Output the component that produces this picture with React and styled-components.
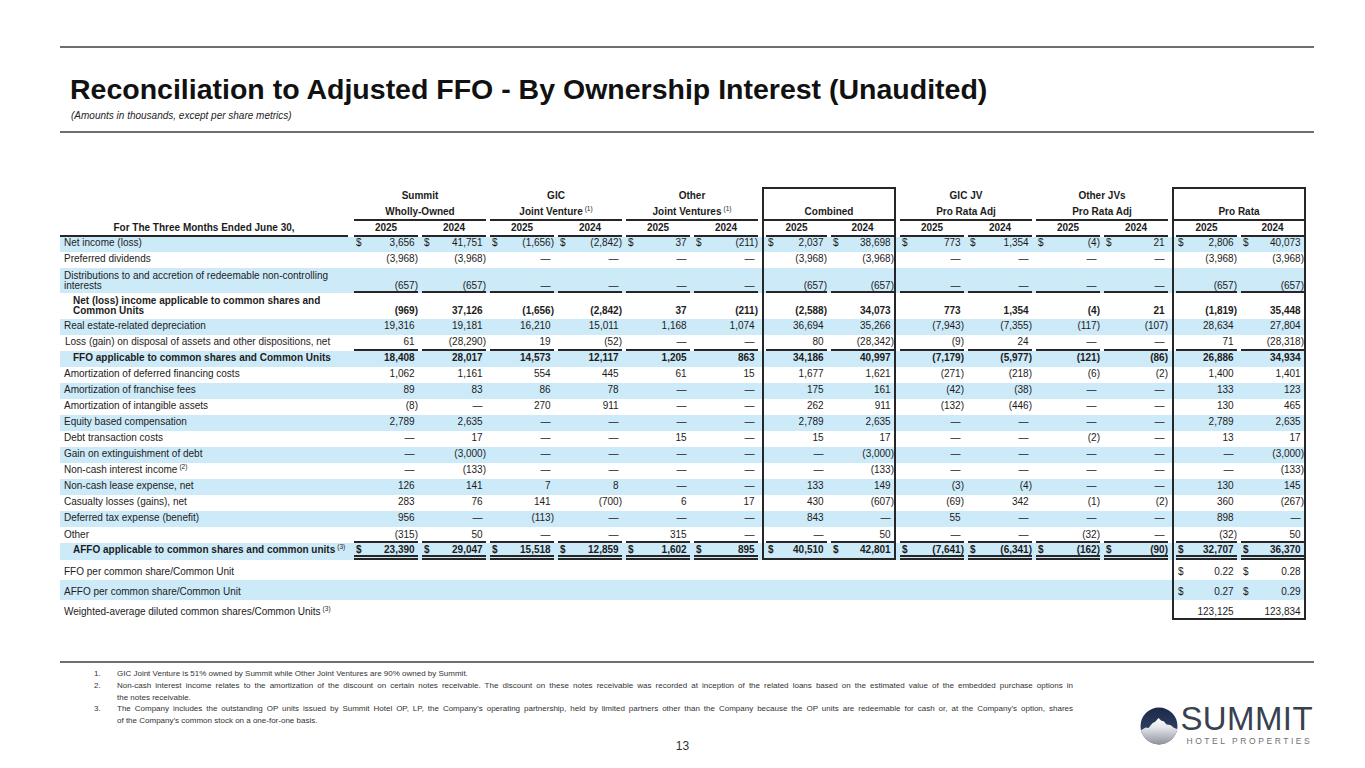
import React from 'react';
import styled, { createGlobalStyle } from 'styled-components';

const INK = '#1c1c1c';
const LINE = '#262626';
const SHADE = '#cdeaf9';
const COLS = '290px repeat(6, 68px) 4px 67px 67px repeat(4, 68px) 4px 67px 67px';

const GlobalStyle = createGlobalStyle`
  html, body { margin: 0; padding: 0; background: #ffffff; }
  body { font-family: "Liberation Sans", Arial, Helvetica, sans-serif; color: ${INK}; }
`;

const Slide = styled.main`
  box-sizing: border-box;
  width: 1365px;
  height: 768px;
  overflow: hidden;
  padding-top: 46px;
  display: flex;
  flex-direction: column;
  background: #fff;
`;

const Rule = styled.div`
  flex: none;
  height: 2px;
  margin: ${p => p.$top || 0}px 51px 0 60px;
  background: #6f6f6f;
`;

const Title = styled.h1`
  margin: 25px 0 0 70px;
  font-size: 28.5px;
  line-height: 32px;
  font-weight: 700;
  color: #111;
`;

const Subtitle = styled.p`
  margin: 5px 0 9px 71px;
  font-size: 10px;
  line-height: 12px;
  font-style: italic;
  color: #222;
`;

const Table = styled.section`
  margin: 54px 0 0 60px;
  width: 1246px;
  font-size: 10px;
  line-height: 10px;
  color: ${INK};
`;

const Row = styled.div`
  display: grid;
  grid-template-columns: ${COLS};
  height: ${p => p.$h}px;
  background: ${p => (p.$shade ? SHADE : '#fff')};
`;

const Cell = styled.div`
  box-sizing: border-box;
  min-width: 0;
  display: flex;
  grid-column: span ${p => p.$span || 1};
  padding: 0 ${p => p.$pr || 0}px 0 ${p => (p.$pl === undefined ? 4 : p.$pl)}px;
  border-left: ${p => (p.$bl ? `2px solid ${LINE}` : '0')};
  border-right: ${p => (p.$br ? `2px solid ${LINE}` : '0')};
  border-top: ${p => (p.$bt ? `2px solid ${LINE}` : '0')};
  border-bottom: ${p => (p.$bb ? `2px solid ${LINE}` : '0')};
`;

const lineStyle = { single: `2px solid ${LINE}`, double: `5px double ${LINE}` };
const lineW = l => (l === 'single' ? 2 : l === 'double' ? 5 : 0);

const Val = styled.div`
  flex: 1;
  min-width: 0;
  box-sizing: border-box;
  display: flex;
  align-items: flex-end;
  justify-content: ${p => p.$align || 'space-between'};
  padding-bottom: ${p => p.$pb}px;
  border-bottom: ${p => (p.$line ? lineStyle[p.$line] : '0')};
  font-weight: ${p => (p.$bold ? 700 : 400)};
  white-space: nowrap;
`;

const LabelText = styled.span`
  display: block;
  white-space: nowrap;
`;

const Sup = styled.sup`
  font-size: 6.5px;
  line-height: 0;
  vertical-align: 4px;
  margin-left: 2px;
  font-weight: 400;
`;

const Dollar = styled.span`
  margin-left: 2px;
`;

const Num = styled.span`
  padding-right: ${p => (p.$paren ? 0 : 3.4)}px;
`;

const Footer = styled.footer`
  display: grid;
  grid-template-columns: 1fr 40px 1fr;
  grid-template-rows: auto auto;
  padding-top: 5px;
`;

const Notes = styled.ol`
  grid-column: 1 / 4;
  grid-row: 1;
  margin: 0;
  padding: 0 0 0 94px;
  list-style: none;
  font-size: 8px;
  line-height: 11.75px;
  color: #333;
`;

const Note = styled.li`
  display: grid;
  grid-template-columns: 23px 956px;
`;

const NoteLine = styled.span`
  display: block;
  white-space: ${p => (p.$fill ? 'normal' : 'nowrap')};
  text-align: justify;
  text-align-last: ${p => (p.$fill ? 'justify' : 'auto')};
`;

const PageNum = styled.div`
  grid-column: 2;
  grid-row: 2;
  margin-top: 12px;
  text-align: center;
  font-size: 12px;
  line-height: 14px;
  color: #333;
`;

const Logo = styled.div`
  grid-column: 3;
  grid-row: 1 / 3;
  justify-self: end;
  align-self: end;
  margin: 0 52px 7px 0;
  display: flex;
  align-items: center;
  gap: 2px;
`;

const LogoWords = styled.div`
  display: flex;
  flex-direction: column;
`;

const LogoName = styled.span`
  font-size: 33px;
  line-height: 26px;
  letter-spacing: 0.4px;
  color: #3a414e;
`;

const LogoTag = styled.span`
  margin: 4px 0 0 6px;
  font-size: 8.5px;
  line-height: 10px;
  letter-spacing: 2.55px;
  color: #6d7078;
`;

const D = '—';
const E = '';

const rows = [
  { label: 'Net income (loss)', h: 15, pb: 4, shade: true, dollar: true,
    vals: ['3,656', '41,751', '(1,656)', '(2,842)', '37', '(211)', '2,037', '38,698', '773', '1,354', '(4)', '21', '2,806', '40,073'] },
  { label: 'Preferred dividends', h: 16, pb: 4,
    vals: ['(3,968)', '(3,968)', D, D, D, D, '(3,968)', '(3,968)', D, D, D, D, '(3,968)', '(3,968)'] },
  { label: ['Distributions to and accretion of redeemable non-controlling', 'interests'], h: 25, pb: 0, shade: true, line: 'single',
    vals: ['(657)', '(657)', D, D, D, D, '(657)', '(657)', D, D, D, D, '(657)', '(657)'] },
  { label: ['Net (loss) income applicable to common shares and', 'Common Units'], h: 26, pb: 3, bold: true, indent: 13,
    vals: ['(969)', '37,126', '(1,656)', '(2,842)', '37', '(211)', '(2,588)', '34,073', '773', '1,354', '(4)', '21', '(1,819)', '35,448'] },
  { label: 'Real estate-related depreciation', h: 16, pb: 4, shade: true,
    vals: ['19,316', '19,181', '16,210', '15,011', '1,168', '1,074', '36,694', '35,266', '(7,943)', '(7,355)', '(117)', '(107)', '28,634', '27,804'] },
  { label: 'Loss (gain) on disposal of assets and other dispositions, net', h: 16, pb: 2, line: 'single', indent: 5,
    vals: ['61', '(28,290)', '19', '(52)', D, D, '80', '(28,342)', '(9)', '24', D, D, '71', '(28,318)'] },
  { label: 'FFO applicable to common shares and Common Units', h: 16, pb: 4, shade: true, bold: true, indent: 13,
    vals: ['18,408', '28,017', '14,573', '12,117', '1,205', '863', '34,186', '40,997', '(7,179)', '(5,977)', '(121)', '(86)', '26,886', '34,934'] },
  { label: 'Amortization of deferred financing costs', h: 16, pb: 4,
    vals: ['1,062', '1,161', '554', '445', '61', '15', '1,677', '1,621', '(271)', '(218)', '(6)', '(2)', '1,400', '1,401'] },
  { label: 'Amortization of franchise fees', h: 16, pb: 4, shade: true,
    vals: ['89', '83', '86', '78', D, D, '175', '161', '(42)', '(38)', D, D, '133', '123'] },
  { label: 'Amortization of intangible assets', h: 16, pb: 4,
    vals: ['(8)', D, '270', '911', D, D, '262', '911', '(132)', '(446)', D, D, '130', '465'] },
  { label: 'Equity based compensation', h: 16, pb: 4, shade: true,
    vals: ['2,789', '2,635', D, D, D, D, '2,789', '2,635', D, D, D, D, '2,789', '2,635'] },
  { label: 'Debt transaction costs', h: 16, pb: 4,
    vals: [D, '17', D, D, '15', D, '15', '17', D, D, '(2)', D, '13', '17'] },
  { label: 'Gain on extinguishment of debt', h: 16, pb: 4, shade: true,
    vals: [D, '(3,000)', D, D, D, D, D, '(3,000)', D, D, D, D, D, '(3,000)'] },
  { label: 'Non-cash interest income', sup: '(2)', h: 16, pb: 4,
    vals: [D, '(133)', D, D, D, D, D, '(133)', D, D, D, D, D, '(133)'] },
  { label: 'Non-cash lease expense, net', h: 16, pb: 4, shade: true,
    vals: ['126', '141', '7', '8', D, D, '133', '149', '(3)', '(4)', D, D, '130', '145'] },
  { label: 'Casualty losses (gains), net', h: 16, pb: 4,
    vals: ['283', '76', '141', '(700)', '6', '17', '430', '(607)', '(69)', '342', '(1)', '(2)', '360', '(267)'] },
  { label: 'Deferred tax expense (benefit)', h: 16, pb: 4, shade: true,
    vals: ['956', D, '(113)', D, D, D, '843', D, '55', D, D, D, '898', D] },
  { label: 'Other', h: 16, pb: 1, line: 'single',
    vals: ['(315)', '50', D, D, '315', D, D, '50', D, D, '(32)', D, '(32)', '50'] },
  { label: 'AFFO applicable to common shares and common units', sup: '(3)', h: 17, pb: 0, line: 'double', shade: true, bold: true, indent: 13, dollar: true, combinedEnd: true,
    vals: ['23,390', '29,047', '15,518', '12,859', '1,602', '895', '40,510', '42,801', '(7,641)', '(6,341)', '(162)', '(90)', '32,707', '36,370'] },
  { label: 'FFO per common share/Common Unit', h: 20, pb: 3, dollar: true, outside: true,
    vals: [E, E, E, E, E, E, E, E, E, E, E, E, '0.22', '0.28'] },
  { label: 'AFFO per common share/Common Unit', h: 20, pb: 3, shade: true, dollar: true, outside: true,
    vals: [E, E, E, E, E, E, E, E, E, E, E, E, '0.27', '0.29'] },
  { label: 'Weighted-average diluted common shares/Common Units', sup: '(3)', h: 20, pb: 3, outside: true, prorataEnd: true,
    vals: [E, E, E, E, E, E, E, E, E, E, E, E, '123,125', '123,834'] },
];

const groups = [
  { top: 'Summit', sub: 'Wholly-Owned' },
  { top: 'GIC', sub: 'Joint Venture', sup: '(1)' },
  { top: 'Other', sub: 'Joint Ventures', sup: '(1)' },
  { spacer: true },
  { top: '', sub: 'Combined', box: true },
  { top: 'GIC JV', sub: 'Pro Rata Adj' },
  { top: 'Other JVs', sub: 'Pro Rata Adj' },
  { spacer: true },
  { top: '', sub: 'Pro Rata', box: true },
];

function boxProps(i, row) {
  const inCombined = i === 6 || i === 7;
  const inPro = i >= 12;
  const boxed = (inCombined && !row.outside) || inPro;
  if (!boxed) return { boxed: false };
  const isLeft = i === 6 || i === 12;
  const bottom = (inCombined && row.combinedEnd) || (inPro && row.prorataEnd);
  return {
    boxed: true,
    inCombined,
    bottom,
    cell: {
      $bl: isLeft,
      $br: !isLeft,
      $bb: bottom,
      $pl: 2,
      $pr: isLeft ? 2 : 0,
    },
  };
}

function ValueCells({ row, render }) {
  const cells = [];
  row.vals.forEach((v, i) => {
    if (i === 6 || i === 12) cells.push(<Cell key={`sp${i}`} $pl={0} />);
    const b = boxProps(i, row);
    let line = row.line;
    let pb = row.pb;
    if (b.bottom) {
      pb = Math.max(0, row.pb + lineW(row.line) - 2);
      line = undefined;
    }
    cells.push(
      <Cell key={i} {...(b.cell || {})}>
        <Val $pb={pb} $line={line} $bold={row.bold} $align={row.align}>
          {render(v, i)}
        </Val>
      </Cell>
    );
  });
  return cells;
}

function Amount({ v, dollar }) {
  if (!v) return null;
  return (
    <>
      {dollar ? <Dollar>$</Dollar> : <span />}
      <Num $paren={v.endsWith(')')}>{v}</Num>
    </>
  );
}

function DataRow({ row }) {
  const labelLines = Array.isArray(row.label) ? row.label : [row.label];
  return (
    <Row $h={row.h} $shade={row.shade}>
      <Cell $pl={row.indent || 4}>
        <Val $pb={row.pb + lineW(row.line)} $bold={row.bold} $align="flex-start">
          <LabelText>
            {labelLines.map((t, k) => (
              <React.Fragment key={k}>
                {k > 0 && <br />}
                {t}
              </React.Fragment>
            ))}
            {row.sup && <Sup>{row.sup}</Sup>}
          </LabelText>
        </Val>
      </Cell>
      <ValueCells row={row} render={v => <Amount v={v} dollar={row.dollar} />} />
    </Row>
  );
}

function GroupRow({ h, pb, field, line }) {
  return (
    <Row $h={h}>
      <Cell />
      {groups.map((g, k) => {
        if (g.spacer) return <Cell key={k} $pl={0} />;
        const edge = g.box ? { $bl: true, $br: true, $pl: 0, $bt: field === 'top' } : {};
        return (
          <Cell key={k} $span={2} {...edge}>
            <Val $pb={pb} $line={line} $bold $align="center">
              <LabelText>
                {g[field]}
                {field === 'sub' && g.sup && <Sup>{g.sup}</Sup>}
              </LabelText>
            </Val>
          </Cell>
        );
      })}
    </Row>
  );
}

function YearRow() {
  const years = ['2025', '2024', '2025', '2024', '2025', '2024', '2025', '2024', '2025', '2024', '2025', '2024', '2025', '2024'];
  const row = { vals: years, pb: 2, line: 'single', bold: true, align: 'center' };
  return (
    <Row $h={16}>
      <Cell $pl={0} $pr={2}>
        <Val $pb={2} $line="single" $bold $align="center">
          <LabelText>For The Three Months Ended June 30,</LabelText>
        </Val>
      </Cell>
      <ValueCells row={row} render={v => <LabelText>{v}</LabelText>} />
    </Row>
  );
}

function SummitLogo() {
  return (
    <Logo>
      <svg width="38" height="38" viewBox="0 0 40 40" aria-hidden="true">
        <defs>
          <linearGradient id="sumSky" x1="0" y1="0" x2="0" y2="1">
            <stop offset="0" stopColor="#1b2947" />
            <stop offset="0.6" stopColor="#2f3f62" />
            <stop offset="1" stopColor="#44547a" />
          </linearGradient>
          <linearGradient id="sumSnow" x1="0" y1="0" x2="0" y2="1">
            <stop offset="0" stopColor="#ffffff" />
            <stop offset="0.35" stopColor="#e4e6ea" />
            <stop offset="1" stopColor="#8b9099" />
          </linearGradient>
          <clipPath id="sumDisc">
            <circle cx="20" cy="20" r="19.5" />
          </clipPath>
        </defs>
        <g clipPath="url(#sumDisc)">
          <rect width="40" height="40" fill="url(#sumSky)" />
          <path d="M0 25 L6 21.5 L9 22 L13 17 L16 15.5 L19.5 11.5 L22.5 14.5 L25 15 L28 18.5 L32 19 L36 22 L40 23.5 L40 40 L0 40 Z" fill="url(#sumSnow)" />
        </g>
      </svg>
      <LogoWords>
        <LogoName>SUMMIT</LogoName>
        <LogoTag>HOTEL PROPERTIES</LogoTag>
      </LogoWords>
    </Logo>
  );
}

const notes = [
  ['GIC Joint Venture is 51% owned by Summit while Other Joint Ventures are 90% owned by Summit.'],
  [
    'Non-cash interest income relates to the amortization of the discount on certain notes receivable. The discount on these notes receivable was recorded at inception of the related loans based on the estimated value of the embedded purchase options in',
    'the notes receivable.',
  ],
  [
    'The Company includes the outstanding OP units issued by Summit Hotel OP, LP, the Company’s operating partnership, held by limited partners other than the Company because the OP units are redeemable for cash or, at the Company’s option, shares',
    'of the Company’s common stock on a one-for-one basis.',
  ],
];

export default function App() {
  return (
    <>
      <GlobalStyle />
      <Slide>
        <Rule />
        <Title>Reconciliation to Adjusted FFO - By Ownership Interest (Unaudited)</Title>
        <Subtitle>(Amounts in thousands, except per share metrics)</Subtitle>
        <Rule />
        <Table>
          <GroupRow h={17} pb={3} field="top" />
          <GroupRow h={17} pb={2} field="sub" line="single" />
          <YearRow />
          {rows.map((r, k) => (
            <DataRow key={k} row={r} />
          ))}
        </Table>
        <Rule $top={41} />
        <Footer>
          <Notes>
            {notes.map((lines, k) => (
              <Note key={k}>
                <span>{k + 1}.</span>
                <span>
                  {lines.map((t, j) => (
                    <NoteLine key={j} $fill={j < lines.length - 1}>
                      {t}
                    </NoteLine>
                  ))}
                </span>
              </Note>
            ))}
          </Notes>
          <PageNum>13</PageNum>
          <SummitLogo />
        </Footer>
      </Slide>
    </>
  );
}
